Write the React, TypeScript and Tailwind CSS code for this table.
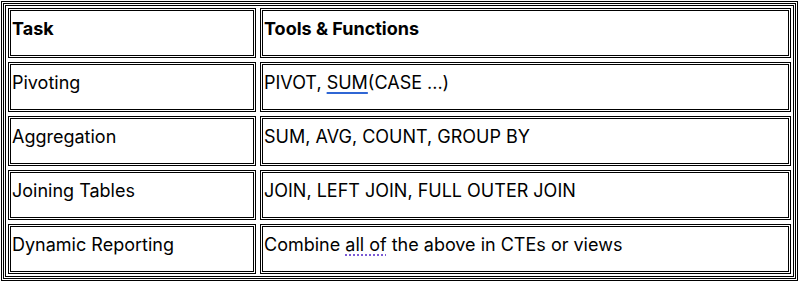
import React from "react"

const rows: { task: string; tools: React.ReactNode }[] = [
  {
    task: "Pivoting",
    tools: (
      <>
        PIVOT,{" "}
        <span className="underline decoration-[#2f66d4] decoration-[1.5px] underline-offset-[3px]">SUM</span>
        (CASE ...)
      </>
    ),
  },
  { task: "Aggregation", tools: "SUM, AVG, COUNT, GROUP BY" },
  { task: "Joining Tables", tools: "JOIN, LEFT JOIN, FULL OUTER JOIN" },
  {
    task: "Dynamic Reporting",
    tools: (
      <>
        Combine{" "}
        <span className="underline decoration-dotted decoration-[#7c5bd6] decoration-2 underline-offset-[3px]">all of</span>{" "}
        the above in CTEs or views
      </>
    ),
  },
]

function Cell({ children, bold }: { children: React.ReactNode; bold?: boolean }) {
  return (
    <div
      className={`h-[50px] border-[3px] border-double border-black pt-[8px] pl-px text-[18px] leading-[20px] text-black ${
        bold ? "font-bold" : ""
      }`}
    >
      {children}
    </div>
  )
}

export default function App() {
  return (
    <div className="bg-white w-[805px] h-[283px] pt-px pl-px font-['Inter','Liberation_Sans',sans-serif]">
      {/* triple outer rule */}
      <div className="w-[797px] border border-black p-px">
        <div className="border border-black p-px">
          <div className="border border-black p-[2px]">
            <div className="grid grid-cols-[248px_1fr] gap-[4px]">
              <Cell bold>Task</Cell>
              <Cell bold>Tools &amp; Functions</Cell>
              {rows.map((r) => (
                <React.Fragment key={r.task}>
                  <Cell>{r.task}</Cell>
                  <Cell>{r.tools}</Cell>
                </React.Fragment>
              ))}
            </div>
          </div>
        </div>
      </div>
    </div>
  )
}
